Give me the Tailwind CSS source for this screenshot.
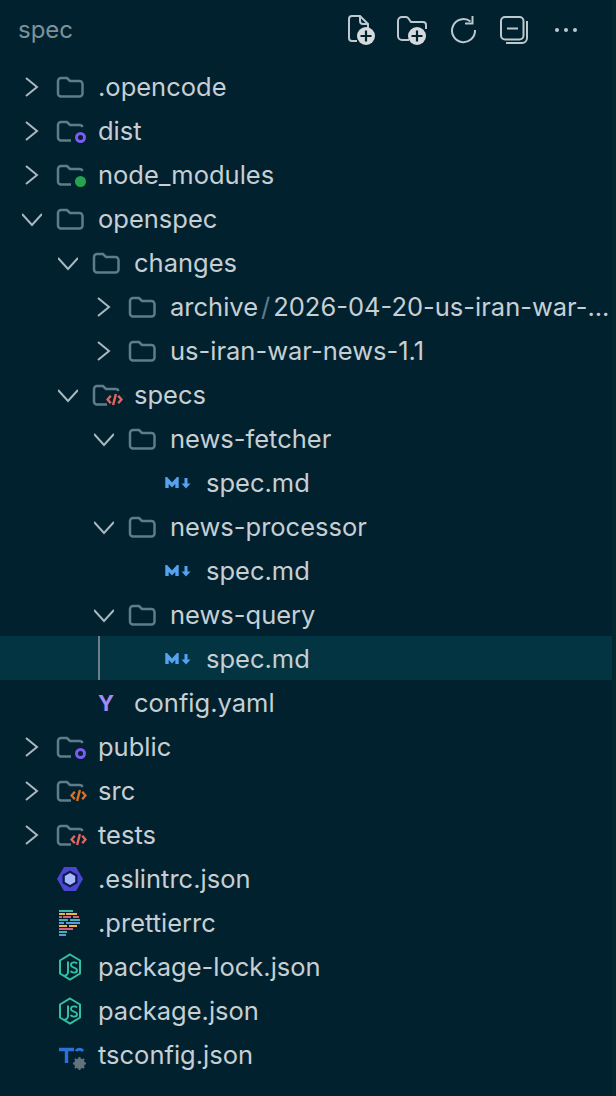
<!DOCTYPE html>
<html lang="en">
  <head>
    <meta charset="UTF-8" />
    <title>spec explorer</title>
    <script src="https://cdn.jsdelivr.net/npm/@tailwindcss/browser@4"></script>
  </head>
  <body class="w-[616px] h-[1096px] overflow-hidden bg-[#02212f] font-['Inter','Liberation_Sans',sans-serif] text-[25.5px] text-[#c6cfd3]">
    <!-- shared icons -->
    <svg class="hidden">
      <defs>
        <symbol id="right" viewBox="0 0 20 24"><path d="M4 3l11 9-11 9" fill="none" stroke="#a9b9bf" stroke-width="2"/></symbol>
        <symbol id="down" viewBox="0 0 20 24"><path d="M0 7l10 11 10-11" fill="none" stroke="#a9b9bf" stroke-width="2"/></symbol>
        <symbol id="folder" viewBox="0 0 28 24"><path d="M5 3h6l3 3h9.500a3 3 0 0 1 3 3v9.500a3 3 0 0 1-3 3H5a3 3 0 0 1-3-3V6a3 3 0 0 1 3-3z" fill="none" stroke="#5f7c8a" stroke-width="2.500"/></symbol>
        <symbol id="folder-cut" viewBox="0 0 28 24"><path d="M15 21.500H5a3 3 0 0 1-3-3V6a3 3 0 0 1 3-3h6l3 3h9.500a3 3 0 0 1 3 2" fill="none" stroke="#5f7c8a" stroke-width="2.500"/></symbol>
        <symbol id="code" viewBox="0 0 18 14"><path d="M5 3L1.500 7 5 11M13 3l3.500 4-3.500 4M10.500 1l-3 12" fill="none" stroke="currentColor" stroke-width="2.600"/></symbol>
        <symbol id="md" viewBox="0 0 26 12"><path d="M2 11V2.500l5 5.500 5-5.500V11" fill="none" stroke="#55a3f0" stroke-width="3.400"/><path d="M21 1v7" stroke="#55a3f0" stroke-width="3"/><path d="M16.500 6.500h9L21 11.500z" fill="#55a3f0"/></symbol>
        <symbol id="js" viewBox="0 0 24 28"><path d="M12 1.500l10 6v13l-10 6-10-6v-13z" fill="none" stroke="#33bfa3" stroke-width="2"/><path d="M10 8.500v10.500a3.500 3.500 0 0 1-3.500 3.500" fill="none" stroke="#33bfa3" stroke-width="2"/><path d="M19 10.500c-1.500-1.700-6-1.700-6 1.500s6 2 6 5.200-4.700 3-6.500 1" fill="none" stroke="#33bfa3" stroke-width="1.900"/></symbol>
      </defs>
    </svg>

    <div class="flex h-full">
      <div class="w-[612px]">
        <!-- header -->
        <div class="h-[64px] flex items-center justify-between pl-[18px] pr-[35px]">
          <span class="text-[24px] text-[#7c9299] -mt-[5px]">spec</span>
          <div class="flex items-center -mt-[5px] text-[#bcc9ce]">
            <svg width="29" height="30" viewBox="0 0 29 30"><path d="M10 26H5a3 3 0 0 1-3-3V4a3 3 0 0 1 3-3h8l8 8v4M13 1v5a3 3 0 0 0 3 3h5" fill="none" stroke="currentColor" stroke-width="2"/><circle cx="19" cy="21" r="9" fill="#d5dadd"/><path d="M19 15.500v11M13.500 21h11" stroke="#02212f" stroke-width="2.200"/></svg>
            <svg class="ml-[20px]" width="32" height="30" viewBox="0 0 32 30"><path d="M13 25H6a4 4 0 0 1-4-4V6a4 4 0 0 1 4-4h4a3 3 0 0 1 2.500 1.500L15 7h12a3 3 0 0 1 3 3v4" fill="none" stroke="currentColor" stroke-width="2"/><circle cx="21" cy="21" r="9" fill="#d5dadd"/><path d="M21 15.500v11M15.500 21h11" stroke="#02212f" stroke-width="2.200"/></svg>
            <svg class="ml-[22px]" width="27" height="28" viewBox="0 0 27 28"><path d="M20.500 5.500A11.500 11.500 0 1 0 25 14" fill="none" stroke="currentColor" stroke-width="2"/><path d="M22.500 0v7.500H15" fill="none" stroke="currentColor" stroke-width="2"/></svg>
            <svg class="ml-[23px]" width="28" height="28" viewBox="0 0 28 28"><rect x="1" y="1" width="22.500" height="22.500" rx="4" fill="none" stroke="currentColor" stroke-width="2"/><path d="M7 12.500h11" stroke="currentColor" stroke-width="2"/><path d="M27 5v17a5 5 0 0 1-5 5H6" fill="none" stroke="currentColor" stroke-width="2"/></svg>
            <div class="flex gap-[5px] ml-[27px]">
              <span class="w-[4px] h-[4px] rounded-full bg-[#bcc9ce]"></span>
              <span class="w-[4px] h-[4px] rounded-full bg-[#bcc9ce]"></span>
              <span class="w-[4px] h-[4px] rounded-full bg-[#bcc9ce]"></span>
            </div>
          </div>
        </div>

        <!-- tree -->
        <div class="leading-[40px]">
          <div class="h-[44px] pt-[2px] flex items-center pl-[22px]">
            <svg class="w-[20px] h-[24px] shrink-0"><use href="#right"/></svg>
            <svg class="w-[28px] h-[24px] ml-[14px] mr-[14px] shrink-0"><use href="#folder"/></svg>
            <span>.opencode</span>
          </div>
          <div class="h-[44px] pt-[2px] flex items-center pl-[22px]">
            <svg class="w-[20px] h-[24px] shrink-0"><use href="#right"/></svg>
            <span class="relative w-[28px] h-[24px] ml-[14px] mr-[14px] shrink-0">
              <svg class="w-[28px] h-[24px]"><use href="#folder-cut"/></svg>
              <span class="absolute left-[19px] top-[13px] w-[11px] h-[11px] rounded-full border-[3px] border-[#7a5cf0]"></span>
            </span>
            <span>dist</span>
          </div>
          <div class="h-[44px] pt-[2px] flex items-center pl-[22px]">
            <svg class="w-[20px] h-[24px] shrink-0"><use href="#right"/></svg>
            <span class="relative w-[28px] h-[24px] ml-[14px] mr-[14px] shrink-0">
              <svg class="w-[28px] h-[24px]"><use href="#folder-cut"/></svg>
              <span class="absolute left-[19px] top-[13px] w-[11px] h-[11px] rounded-full bg-[#27a24f]"></span>
            </span>
            <span>node_modules</span>
          </div>
          <div class="h-[44px] pt-[2px] flex items-center pl-[22px]">
            <svg class="w-[20px] h-[24px] shrink-0"><use href="#down"/></svg>
            <svg class="w-[28px] h-[24px] ml-[14px] mr-[14px] shrink-0"><use href="#folder"/></svg>
            <span>openspec</span>
          </div>
          <div class="h-[44px] pt-[2px] flex items-center pl-[58px]">
            <svg class="w-[20px] h-[24px] shrink-0"><use href="#down"/></svg>
            <svg class="w-[28px] h-[24px] ml-[14px] mr-[14px] shrink-0"><use href="#folder"/></svg>
            <span>changes</span>
          </div>
          <div class="h-[44px] pt-[2px] flex items-center pl-[94px]">
            <svg class="w-[20px] h-[24px] shrink-0"><use href="#right"/></svg>
            <svg class="w-[28px] h-[24px] ml-[14px] mr-[14px] shrink-0"><use href="#folder"/></svg>
            <span class="whitespace-nowrap">archive<span class="text-[#5f7c8a] mx-[3px]">/</span>2026-04-20-us-iran-war-...</span>
          </div>
          <div class="h-[44px] pt-[2px] flex items-center pl-[94px]">
            <svg class="w-[20px] h-[24px] shrink-0"><use href="#right"/></svg>
            <svg class="w-[28px] h-[24px] ml-[14px] mr-[14px] shrink-0"><use href="#folder"/></svg>
            <span>us-iran-war-news-1.1</span>
          </div>
          <div class="h-[44px] pt-[2px] flex items-center pl-[58px]">
            <svg class="w-[20px] h-[24px] shrink-0"><use href="#down"/></svg>
            <span class="relative w-[28px] h-[24px] ml-[14px] mr-[14px] shrink-0 text-[#e8635c]">
              <svg class="w-[28px] h-[24px]"><use href="#folder-cut"/></svg>
              <svg class="absolute left-[14px] top-[10px] w-[17px] h-[13px]"><use href="#code"/></svg>
            </span>
            <span>specs</span>
          </div>
          <div class="h-[44px] pt-[2px] flex items-center pl-[94px]">
            <svg class="w-[20px] h-[24px] shrink-0"><use href="#down"/></svg>
            <svg class="w-[28px] h-[24px] ml-[14px] mr-[14px] shrink-0"><use href="#folder"/></svg>
            <span>news-fetcher</span>
          </div>
          <div class="h-[44px] pt-[2px] flex items-center pl-[165px]">
            <svg class="w-[26px] h-[12px] mr-[15px] shrink-0"><use href="#md"/></svg>
            <span>spec.md</span>
          </div>
          <div class="h-[44px] pt-[2px] flex items-center pl-[94px]">
            <svg class="w-[20px] h-[24px] shrink-0"><use href="#down"/></svg>
            <svg class="w-[28px] h-[24px] ml-[14px] mr-[14px] shrink-0"><use href="#folder"/></svg>
            <span>news-processor</span>
          </div>
          <div class="h-[44px] pt-[2px] flex items-center pl-[165px]">
            <svg class="w-[26px] h-[12px] mr-[15px] shrink-0"><use href="#md"/></svg>
            <span>spec.md</span>
          </div>
          <div class="h-[44px] pt-[2px] flex items-center pl-[94px]">
            <svg class="w-[20px] h-[24px] shrink-0"><use href="#down"/></svg>
            <svg class="w-[28px] h-[24px] ml-[14px] mr-[14px] shrink-0"><use href="#folder"/></svg>
            <span>news-query</span>
          </div>
          <div class="relative h-[44px] pt-[2px] flex items-center pl-[165px] bg-[#033442]">
            <span class="absolute left-[98px] top-0 bottom-0 w-[2px] bg-[#6d7f87]"></span>
            <svg class="w-[26px] h-[12px] mr-[15px] shrink-0"><use href="#md"/></svg>
            <span>spec.md</span>
          </div>
          <div class="h-[44px] pt-[2px] flex items-center pl-[98px]">
            <span class="w-[18px] mr-[18px] shrink-0 text-[22px] font-bold text-[#a58af0]">Y</span>
            <span>config.yaml</span>
          </div>
          <div class="h-[44px] pt-[2px] flex items-center pl-[22px]">
            <svg class="w-[20px] h-[24px] shrink-0"><use href="#right"/></svg>
            <span class="relative w-[28px] h-[24px] ml-[14px] mr-[14px] shrink-0">
              <svg class="w-[28px] h-[24px]"><use href="#folder-cut"/></svg>
              <span class="absolute left-[19px] top-[13px] w-[11px] h-[11px] rounded-full border-[3px] border-[#7a5cf0]"></span>
            </span>
            <span>public</span>
          </div>
          <div class="h-[44px] pt-[2px] flex items-center pl-[22px]">
            <svg class="w-[20px] h-[24px] shrink-0"><use href="#right"/></svg>
            <span class="relative w-[28px] h-[24px] ml-[14px] mr-[14px] shrink-0 text-[#e0701f]">
              <svg class="w-[28px] h-[24px]"><use href="#folder-cut"/></svg>
              <svg class="absolute left-[14px] top-[10px] w-[17px] h-[13px]"><use href="#code"/></svg>
            </span>
            <span>src</span>
          </div>
          <div class="h-[44px] pt-[2px] flex items-center pl-[22px]">
            <svg class="w-[20px] h-[24px] shrink-0"><use href="#right"/></svg>
            <span class="relative w-[28px] h-[24px] ml-[14px] mr-[14px] shrink-0 text-[#e8635c]">
              <svg class="w-[28px] h-[24px]"><use href="#folder-cut"/></svg>
              <svg class="absolute left-[14px] top-[10px] w-[17px] h-[13px]"><use href="#code"/></svg>
            </span>
            <span>tests</span>
          </div>
          <div class="h-[44px] pt-[2px] flex items-center pl-[57px]">
            <svg class="w-[26px] h-[26px] mr-[15px] shrink-0" viewBox="0 0 26 26"><path d="M7 1h12l7 12-7 12H7L0 13z" fill="#4c45d2"/><path d="M13 4.500l7.500 4.250v8.500L13 21.500l-7.500-4.250v-8.500z" fill="#0a1d4a"/><path d="M13 7l5.200 3v6L13 19l-5.200-3v-6z" fill="#a9b6ff"/></svg>
            <span>.eslintrc.json</span>
          </div>
          <div class="h-[44px] pt-[2px] flex items-center pl-[59px]">
            <svg class="w-[22px] h-[26px] mr-[17px] shrink-0" viewBox="0 0 22 26">
              <path d="M0 1h14" stroke="#3fb8a8" stroke-width="2"/><path d="M0 4h6M7 4h11" stroke="#e6b84a" stroke-width="2"/><path d="M0 7h3M4 7h8M14 7h6" stroke="#d65f8a" stroke-width="2"/><path d="M0 10h9M11 10h10" stroke="#3fb8a8" stroke-width="2"/><path d="M0 13h5M7 13h14" stroke="#6f8ee0" stroke-width="2"/><path d="M0 16h8M10 16h8" stroke="#e6b84a" stroke-width="2"/><path d="M0 19h14" stroke="#d65f8a" stroke-width="2"/><path d="M0 22h8" stroke="#3fb8a8" stroke-width="2"/><path d="M0 25h7" stroke="#6f8ee0" stroke-width="2"/>
            </svg>
            <span>.prettierrc</span>
          </div>
          <div class="h-[44px] pt-[2px] flex items-center pl-[58px]">
            <svg class="w-[24px] h-[28px] mr-[16px] shrink-0"><use href="#js"/></svg>
            <span>package-lock.json</span>
          </div>
          <div class="h-[44px] pt-[2px] flex items-center pl-[58px]">
            <svg class="w-[24px] h-[28px] mr-[16px] shrink-0"><use href="#js"/></svg>
            <span>package.json</span>
          </div>
          <div class="h-[44px] pt-[2px] flex items-center pl-[57px]">
            <svg class="w-[28px] h-[24px] mr-[13px] shrink-0 overflow-visible" viewBox="0 0 28 24">
              <path d="M2 6.500h15M9.500 6.500V20" fill="none" stroke="#2f6fd8" stroke-width="3.400"/>
              <path d="M19 8c1.500-2.500 5-2.500 7 0" fill="none" stroke="#2f6fd8" stroke-width="3"/>
              <circle cx="22.500" cy="20.500" r="8.500" fill="#02212f"/>
              <circle cx="22.500" cy="20.500" r="3.800" fill="none" stroke="#62737c" stroke-width="3"/>
              <path d="M22.500 14v13M16 20.500h13M17.900 15.900l9.200 9.200M27.100 15.900l-9.200 9.200" stroke="#62737c" stroke-width="2"/>
            </svg>
            <span>tsconfig.json</span>
          </div>
        </div>
      </div>
      <div class="w-[4px] bg-[#03262f]"></div>
    </div>
  </body>
</html>
